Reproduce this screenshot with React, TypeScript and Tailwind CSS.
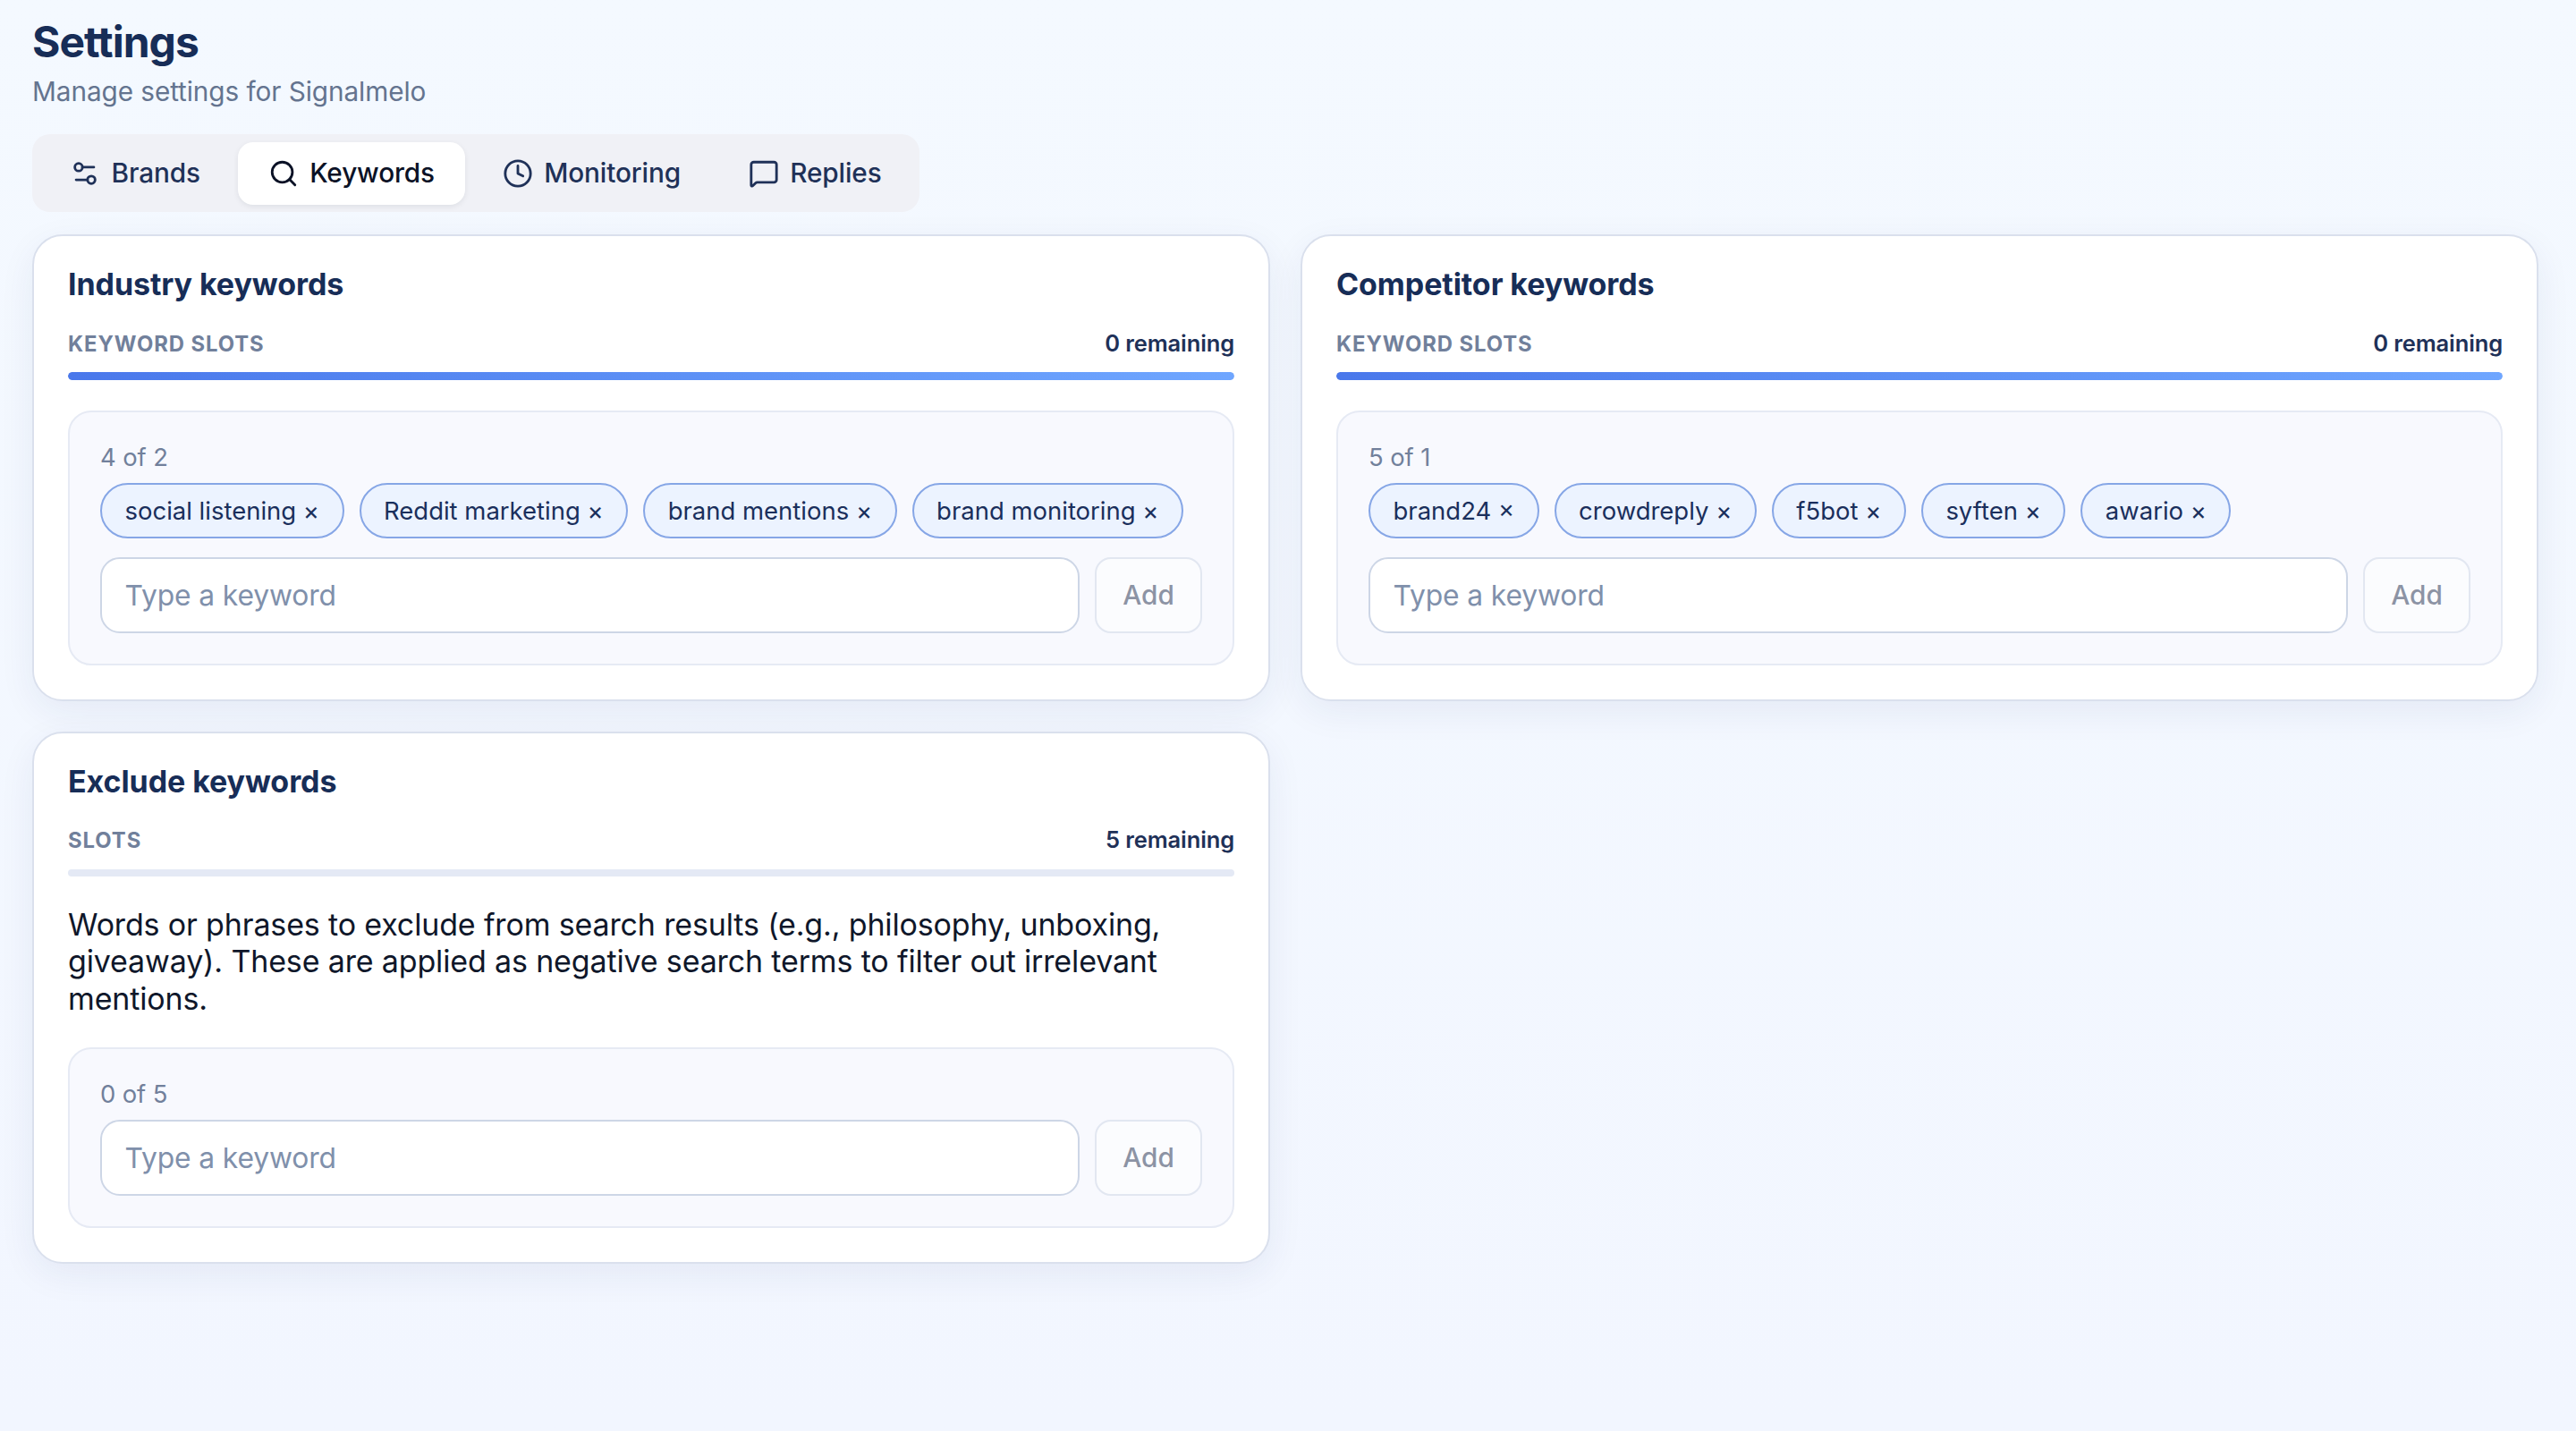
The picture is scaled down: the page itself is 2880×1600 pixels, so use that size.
import { useState } from "react"
import { Clock, MessageSquare, Search, Settings2 } from "lucide-react"

const tabs = [
  { name: "Brands", Icon: Settings2 },
  { name: "Keywords", Icon: Search },
  { name: "Monitoring", Icon: Clock },
  { name: "Replies", Icon: MessageSquare }
]

type KeywordCardProps = {
  title: string
  slotLabel: string
  limit: number
  initial: string[]
  description?: string
}

function KeywordCard({ title, slotLabel, limit, initial, description }: KeywordCardProps) {
  const [keywords, setKeywords] = useState<string[]>(initial)
  const [value, setValue] = useState("")
  const remaining = Math.max(limit - keywords.length, 0)
  const percent = Math.min((keywords.length / limit) * 100, 100)

  function handleAdd() {
    setKeywords([...keywords, value.trim()])
    setValue("")
  }

  return (
    <section className="rounded-[34px] border-2 border-[#dae0ed] bg-white px-[38px] pt-[34px] pb-[38px] shadow-[0_12px_40px_rgba(30,50,110,0.065)]">
      <h2 className="text-[34px] leading-[40.5px] font-bold tracking-[-0.08px] text-[#172d57]">{title}</h2>
      <div className="mt-[27.5px] flex h-9 items-center justify-between">
        <span className="pt-px text-[23.8px] font-bold tracking-[0.95px] text-[#71809b] uppercase">{slotLabel}</span>
        <span className="text-[25.5px] font-semibold tracking-[-0.12px] text-[#1f3158]">{remaining} remaining</span>
      </div>
      <div className="mt-[14px] h-[8.5px] overflow-hidden rounded-full bg-[#e4e9f5]">
        <div className="h-full rounded-full bg-linear-to-r from-[#4a78eb] to-[#6fa6ff]" style={{ width: `${percent}%` }} />
      </div>
      {description && <p className="mt-[33px] text-[34px] leading-[41.4px] tracking-[-0.15px] text-[#0f172a]">{description}</p>}
      <div className="mt-[34px] rounded-[26px] border-2 border-[#e6eaf4] bg-[#f8f9fe] p-[34px]">
        <p className="mb-3 text-[27.4px] leading-[33px] tracking-[-0.1px] text-[#71809b]">{keywords.length} of {limit}</p>
        {keywords.length > 0 && (
          <div className="mb-[21px] flex flex-wrap gap-[17px]">
            {keywords.map((word) => (
              <button
                key={word}
                className="h-[62.5px] rounded-full border-2 border-[#86a6e6] bg-[#ecf3ff] px-[25.5px] pt-px text-[27.48px] text-[#1a2f5c]"
                onClick={() => setKeywords(keywords.filter((k) => k !== word))}
              >
                {word} ×
              </button>
            ))}
          </div>
        )}
        <div className="flex gap-[17px]">
          <input
            className="h-[84.5px] min-w-0 flex-1 rounded-[22px] border-2 border-[#cdd6e6] bg-white px-[25.5px] text-[31.8px] tracking-[-0.12px] text-[#0f172a] outline-none placeholder:text-[#8090ab]"
            type="text"
            placeholder="Type a keyword"
            value={value}
            onChange={(e) => setValue(e.target.value)}
          />
          <button
            className="h-[84.5px] w-[120px] rounded-[18px] border-2 border-[#cdd6e6] bg-white text-[29.75px] font-medium text-[#22304d] disabled:opacity-50"
            disabled={!value.trim()}
            onClick={handleAdd}
          >
            Add
          </button>
        </div>
      </div>
    </section>
  )
}

export default function App() {
  const [active, setActive] = useState("Keywords")

  return (
    <div className="min-h-screen bg-linear-to-b from-[#f4f9ff] to-[#f2f6ff] pt-[23px] pr-[42px] pl-9 font-['Inter',sans-serif]">
      <h1 className="text-[48px] leading-[48px] font-bold tracking-[-0.02em] text-[#172d57]">Settings</h1>
      <p className="mt-[10px] text-[29.75px] leading-[43px] tracking-[-0.08px] text-[#64748f]">Manage settings for Signalmelo</p>

      <div className="mt-[26px] inline-flex h-[87px] items-center gap-[8.5px] rounded-[20px] bg-[#f0f1f6] px-[8.5px]">
        {tabs.map(({ name, Icon }) => (
          <button
            key={name}
            className={`flex h-[70px] items-center gap-[12.5px] rounded-[17px] px-[33.6px] text-[29.75px] font-medium tracking-[-0.12px] ${
              active === name ? "bg-white text-[#0b1226] shadow-[0_2px_6px_rgba(15,23,42,0.08)]" : "text-[#1f3158]"
            }`}
            onClick={() => setActive(name)}
          >
            <Icon size={34} />
            {name}
          </button>
        ))}
      </div>

      <div className="mt-[25px] grid grid-cols-2 items-start gap-x-[34px] gap-y-[34px]">
        <KeywordCard
          title="Industry keywords"
          slotLabel="Keyword slots"
          limit={2}
          initial={["social listening", "Reddit marketing", "brand mentions", "brand monitoring"]}
        />
        <KeywordCard
          title="Competitor keywords"
          slotLabel="Keyword slots"
          limit={1}
          initial={["brand24", "crowdreply", "f5bot", "syften", "awario"]}
        />
        <KeywordCard
          title="Exclude keywords"
          slotLabel="Slots"
          limit={5}
          initial={[]}
          description="Words or phrases to exclude from search results (e.g., philosophy, unboxing, giveaway). These are applied as negative search terms to filter out irrelevant mentions."
        />
      </div>
    </div>
  )
}
